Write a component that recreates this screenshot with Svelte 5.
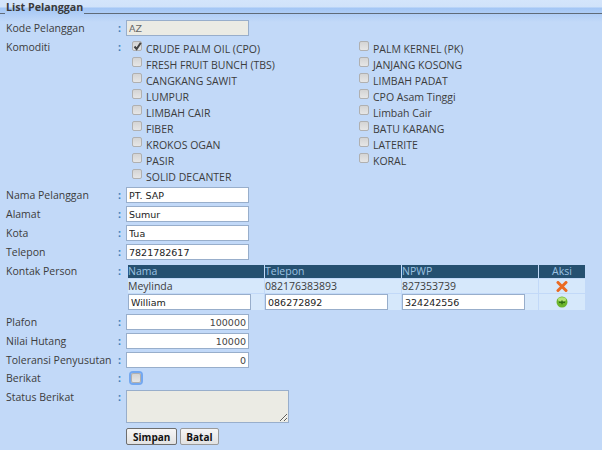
<script>
  const komoditiA = ['CRUDE PALM OIL (CPO)', 'FRESH FRUIT BUNCH (TBS)', 'CANGKANG SAWIT', 'LUMPUR', 'LIMBAH CAIR', 'FIBER', 'KROKOS OGAN', 'PASIR', 'SOLID DECANTER'];
  const komoditiB = ['PALM KERNEL (PK)', 'JANJANG KOSONG', 'LIMBAH PADAT', 'CPO Asam Tinggi', 'Limbah Cair', 'BATU KARANG', 'LATERITE', 'KORAL'];
</script>

<div class="page">
  <fieldset>
    <legend>List Pelanggan</legend>

    <div class="row">
      <span class="label">Kode Pelanggan</span><span class="colon">:</span>
      <input class="text disabled" value="AZ" disabled />
    </div>

    <div class="row komoditi">
      <span class="label">Komoditi</span><span class="colon">:</span>
      <div class="checks">
        <div class="col-a">
          {#each komoditiA as item, i}
            <div class="check"><span class="box">
              {#if i === 0}<svg width="11" height="11" viewBox="0 0 11 11"><path d="M2.5 5.5 L4.6 8 L8.8 1.8" fill="none" stroke="#444" stroke-width="2"/></svg>{/if}
            </span>{item}</div>
          {/each}
        </div>
        <div>
          {#each komoditiB as item}
            <div class="check"><span class="box"></span>{item}</div>
          {/each}
        </div>
      </div>
    </div>

    <div class="row"><span class="label">Nama Pelanggan</span><span class="colon">:</span><input class="text" value="PT. SAP" /></div>
    <div class="row"><span class="label">Alamat</span><span class="colon">:</span><input class="text" value="Sumur" /></div>
    <div class="row"><span class="label">Kota</span><span class="colon">:</span><input class="text" value="Tua" /></div>
    <div class="row"><span class="label">Telepon</span><span class="colon">:</span><input class="text" value="7821782617" /></div>

    <div class="row kontak">
      <span class="label">Kontak Person</span><span class="colon">:</span>
      <table>
        <thead>
          <tr><th>Nama</th><th>Telepon</th><th>NPWP</th><th class="aksi">Aksi</th></tr>
        </thead>
        <tbody>
          <tr>
            <td>Meylinda</td><td>082176383893</td><td>827353739</td>
            <td class="aksi">
              <svg width="12" height="11" viewBox="0 0 12 11"><path d="M2 1.5 L10 9.5 M10 1.5 L2 9.5" stroke="#ea6a22" stroke-width="3" stroke-linecap="round"/></svg>
            </td>
          </tr>
          <tr>
            <td><input class="text cell" value="William" /></td>
            <td><input class="text cell" value="086272892" /></td>
            <td><input class="text cell" value="324242556" /></td>
            <td class="aksi">
              <svg width="12" height="12" viewBox="0 0 12 12">
                <circle cx="6" cy="6" r="5.5" fill="#6cb52c"/>
                <ellipse cx="6" cy="3.6" rx="4" ry="2.4" fill="#b5e276"/>
                <path d="M3 6.3 H9 M6 4.4 V8.2" stroke="#2d6b12" stroke-width="1.4"/>
              </svg>
            </td>
          </tr>
        </tbody>
      </table>
    </div>

    <div class="row"><span class="label">Plafon</span><span class="colon">:</span><input class="text num" value="100000" /></div>
    <div class="row"><span class="label">Nilai Hutang</span><span class="colon">:</span><input class="text num" value="10000" /></div>
    <div class="row toleransi"><span class="label">Toleransi Penyusutan</span><span class="colon">:</span><input class="text num" value="0" /></div>

    <div class="row">
      <span class="label">Berikat</span><span class="colon">:</span>
      <span class="box focus"></span>
    </div>

    <div class="row status">
      <span class="label">Status Berikat</span><span class="colon">:</span>
      <textarea disabled></textarea>
    </div>

    <div class="buttons">
      <button class="primary">Simpan</button>
      <button class="secondary">Batal</button>
    </div>
  </fieldset>
</div>

<style>
  :global(body) {
    margin: 0;
    overflow: hidden;
  }

  .page {
    width: 602px;
    height: 450px;
    overflow: hidden;
    box-sizing: border-box;
    padding-top: 7px;
    background: linear-gradient(#d4e5fb 0, #d0e2fa 7px, #a3c6f5 8px, #c2d9f8 22px);
    font-family: "Open Sans", sans-serif;
    font-size: 10.5px;
    color: #3c3c3c;
  }

  fieldset {
    margin: 0;
    padding: 0 0 0 6px;
    border: 0;
    border-top: 1px solid #5f6b78;
    min-width: 0;
  }

  legend {
    margin-left: -1px;
    margin-top: -1px;
    padding: 0 1px;
    height: 13px;
    line-height: 1px;
    font-weight: 700;
    font-size: 10.7px;
    color: #3a3a3a;
  }

  .row {
    display: flex;
    align-items: flex-start;
    height: 19px;
    line-height: 16px;
  }

  .label {
    width: 112px;
    flex: none;
  }

  .colon {
    width: 8px;
    flex: none;
    color: #3c7fb8;
    font-weight: 700;
  }

  .text {
    box-sizing: border-box;
    width: 123px;
    height: 16px;
    padding: 0 2px;
    margin: 0;
    border: 1px solid #98aecb;
    background: #fff;
    font-family: "DejaVu Sans", sans-serif;
    font-size: 9.5px;
    color: #222;
    outline: none;
  }

  .disabled {
    background: #ebebe4;
    color: #666;
  }

  .num {
    text-align: right;
    color: #444;
  }

  .komoditi {
    height: auto;
    margin-bottom: 2px;
  }

  .checks {
    display: flex;
    margin-left: 6px;
    padding-top: 2px;
  }

  .col-a {
    width: 227px;
  }

  .check {
    display: flex;
    height: 16px;
    line-height: 16px;
    white-space: nowrap;
  }

  .box {
    box-sizing: border-box;
    flex: none;
    display: block;
    width: 10px;
    height: 10px;
    border: 1px solid #b0b0b0;
    border-radius: 2px;
    background: linear-gradient(#d4d4d4, #e6e6e6);
    position: relative;
  }

  .check .box {
    margin-right: 4px;
  }

  .box svg {
    position: absolute;
    left: -1px;
    top: -1px;
  }

  .kontak {
    height: 51px;
  }

  table {
    border-collapse: separate;
    border-spacing: 1px;
    margin: 1px 0 0 1px;
    table-layout: fixed;
    width: 459px;
  }

  th {
    background: #255070;
    color: #9cc2e2;
    font-weight: 400;
    text-align: left;
    height: 13px;
    line-height: 13px;
    padding: 0;
    width: 136px;
  }

  th.aksi {
    width: 46px;
    text-align: center;
  }

  td {
    background: #d6e8fb;
    padding: 0;
    height: 14px;
    line-height: 14px;
    white-space: nowrap;
  }

  td.aksi {
    text-align: center;
    line-height: 0;
  }

  .cell {
    display: block;
  }

  .toleransi {
    height: 18px;
  }

  .focus {
    margin: 3px 0 0 5px;
    box-shadow: 0 0 0 2px #74a8f0;
  }

  .status {
    height: 39px;
  }

  textarea {
    box-sizing: border-box;
    width: 163px;
    height: 33px;
    margin: 1px 0 0 0;
    border: 1px solid #98aecb;
    background: #ebebe4;
    resize: both;
  }

  .buttons {
    display: flex;
    gap: 3px;
    margin-left: 120px;
  }

  button {
    box-sizing: border-box;
    height: 17px;
    padding: 0 6px;
    border: 1px solid #9a9a9a;
    border-radius: 2px;
    background: linear-gradient(#f6f6f6, #e2e2e2);
    font-family: "Open Sans", sans-serif;
    font-size: 10px;
    font-weight: 700;
    color: #111;
  }

  .primary {
    border-color: #6e6e6e;
  }

  .secondary {
    padding: 0 5px;
  }
</style>
